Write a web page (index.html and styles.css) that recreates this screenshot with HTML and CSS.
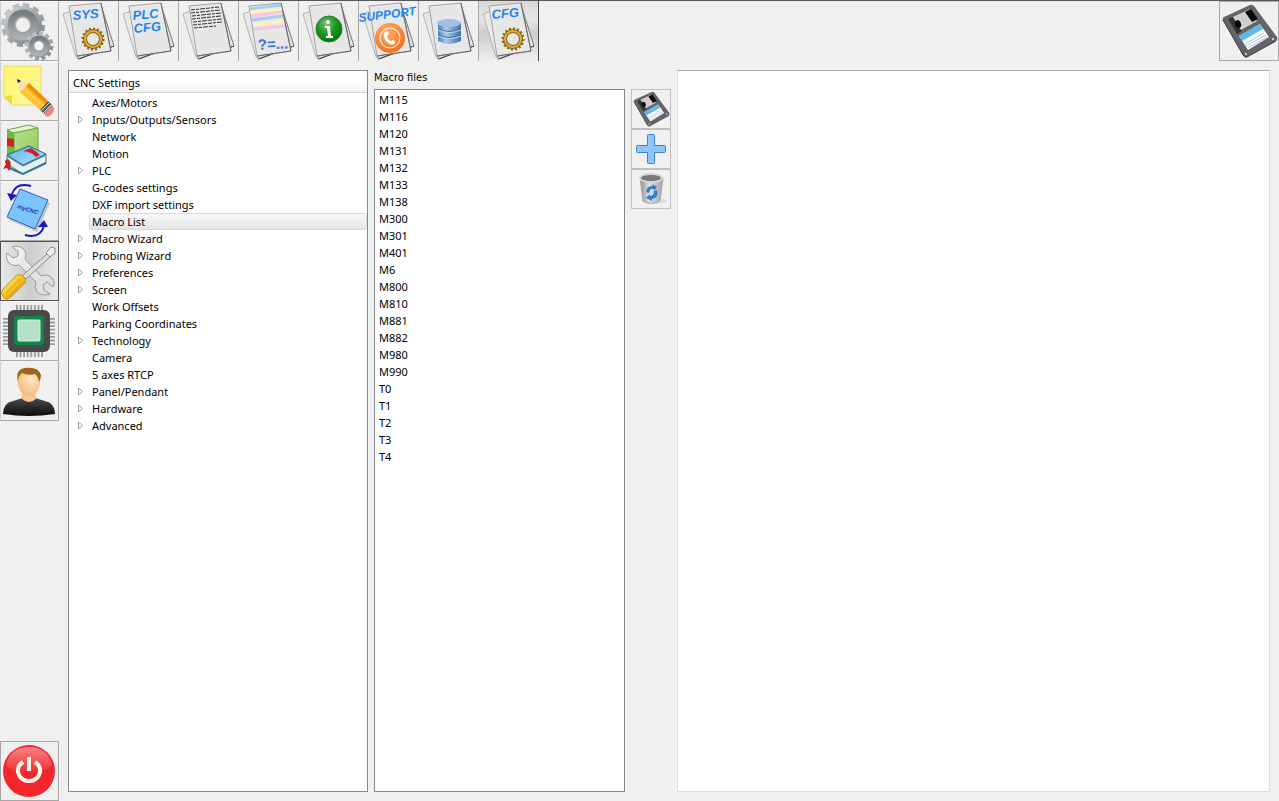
FILE: index.html
```html
<!DOCTYPE html>
<html lang="en">
<head>
    <meta charset="UTF-8">
    <meta name="viewport" content="width=device-width, initial-scale=1.0">
    <title>myCNC - Macro List</title>
    <link rel="stylesheet" href="styles.css">
</head>
<body>
    <!-- shared shapes -->
    <svg class="defs" aria-hidden="true">
        <defs>
            <linearGradient id="steel" x1="0" y1="0" x2="1" y2="1">
                <stop offset="0" stop-color="#c4c8ca"/>
                <stop offset="1" stop-color="#84898c"/>
            </linearGradient>
            <linearGradient id="ring" x1="0" y1="0" x2="0" y2="1">
                <stop offset="0" stop-color="#777d81"/>
                <stop offset="1" stop-color="#a9afb3"/>
            </linearGradient>
            <linearGradient id="note" x1="0" y1="0" x2="1" y2="1">
                <stop offset="0" stop-color="#fdf56a"/>
                <stop offset="1" stop-color="#fbf8a0"/>
            </linearGradient>
            <linearGradient id="wood" x1="0" y1="1" x2="1" y2="0">
                <stop offset="0.3" stop-color="#ffb52e"/>
                <stop offset="0.5" stop-color="#ffcf4a"/>
                <stop offset="0.6" stop-color="#f58a00"/>
            </linearGradient>
            <linearGradient id="greenbook" x1="0" y1="0" x2="1" y2="1">
                <stop offset="0" stop-color="#b5e08c"/>
                <stop offset="1" stop-color="#8fcf5c"/>
            </linearGradient>
            <linearGradient id="bluebook" x1="0" y1="0" x2="1" y2="1">
                <stop offset="0" stop-color="#5db0e4"/>
                <stop offset="1" stop-color="#b6e4fa"/>
            </linearGradient>
            <linearGradient id="handle" x1="0" y1="0" x2="1" y2="1">
                <stop offset="0.3" stop-color="#ffdc4a"/>
                <stop offset="0.7" stop-color="#e9a800"/>
            </linearGradient>
            <linearGradient id="wrench" x1="0" y1="0" x2="1" y2="1">
                <stop offset="0" stop-color="#f2f2f2"/>
                <stop offset="1" stop-color="#d8d8d8"/>
            </linearGradient>
            <radialGradient id="face" cx="0.6" cy="0.4" r="0.7">
                <stop offset="0" stop-color="#ffe6c4"/>
                <stop offset="1" stop-color="#f0b878"/>
            </radialGradient>
            <linearGradient id="shirt" x1="0" y1="0" x2="0" y2="1">
                <stop offset="0" stop-color="#4a4a4a"/>
                <stop offset="1" stop-color="#0c0c0c"/>
            </linearGradient>
            <linearGradient id="shine" x1="0" y1="0" x2="0" y2="1">
                <stop offset="0" stop-color="#ffc0c0"/>
                <stop offset="1" stop-color="#ee3038"/>
            </linearGradient>
            <radialGradient id="green" cx="0.4" cy="0.3" r="0.7">
                <stop offset="0" stop-color="#7cc67c"/>
                <stop offset="0.5" stop-color="#1f9a22"/>
                <stop offset="1" stop-color="#067a0a"/>
            </radialGradient>
            <radialGradient id="orange" cx="0.4" cy="0.3" r="0.8">
                <stop offset="0" stop-color="#ffae6a"/>
                <stop offset="1" stop-color="#f26a0c"/>
            </radialGradient>
            <linearGradient id="drum" x1="0" y1="0" x2="1" y2="0">
                <stop offset="0" stop-color="#4d7fb8"/>
                <stop offset="0.35" stop-color="#a9c8e8"/>
                <stop offset="1" stop-color="#3f6fa8"/>
            </linearGradient>
            <linearGradient id="bin" x1="0" y1="0" x2="1" y2="0">
                <stop offset="0" stop-color="#8e8e8e"/>
                <stop offset="0.4" stop-color="#e2e2e2"/>
                <stop offset="1" stop-color="#a2a2a2"/>
            </linearGradient>
        </defs>
        <symbol id="sheets" viewBox="0 0 59 60">
            <path d="M42 4 55 45 19 58 14 30Z" fill="#e2e2e2" stroke="#777"/>
            <path d="M20 58 55 45" stroke="#444"/>
            <path d="M4 13 12 10 30 52 17 56Z" fill="#e8e8e8" stroke="#b4b4b4"/>
            <path d="M10 5 42 2 52 50 18 55Z" fill="#e7e7e7" stroke="#a4a4a4"/>
            <path d="M42 2 52 50 18 55" fill="none" stroke="#666"/>
        </symbol>
        <symbol id="cog" viewBox="0 0 24 24">
            <circle cx="12" cy="12" r="10" fill="none" stroke="#8a6412" stroke-width="3" pathLength="32" stroke-dasharray="1 1"/>
            <circle cx="12" cy="12" r="8" fill="none" stroke="#8a6412" stroke-width="4"/>
            <circle cx="12" cy="12" r="8" fill="none" stroke="#e0b03a" stroke-width="2"/>
        </symbol>
        <symbol id="disk" viewBox="0 0 58 58">
            <path d="M4 15 30 3Q32 2 34 4L57 35Q58 38 56 39L27 55Q25 56 23 53L3 18Q2 16 4 15Z" fill="#646568"/>
            <path d="M3 18 23 53Q25 56 27 55L56 39" fill="none" stroke="#3a3a3c"/>
            <path d="M8 17 13 15 22 29 17 32Z" fill="#333"/>
            <path d="M13 15 30 7 37 19 21 28Z" fill="#cfcfcf"/>
            <path d="M25 10 31 7 38 17 32 20Z" fill="#080808"/>
            <ellipse cx="18" cy="22" rx="3" ry="4" fill="#080808" transform="rotate(-20 18 22)"/>
            <path d="M19 34 40 22 49 35 28 48Z" fill="#fff"/>
            <path d="M19 34 40 22 43 27 22 39Z" fill="#5cb8f0"/>
            <path d="M25 42 44 31M26 44 46 33M28 46 47 35" stroke="#a9c8de"/>
            <circle cx="53" cy="37" r="1" fill="#eee"/>
            <circle cx="26" cy="52" r="1" fill="#eee"/>
        </symbol>
        <symbol id="arrow" viewBox="0 0 7 9">
            <path d="M1.500 1v7L5.500 4.500Z" fill="#fff" stroke="#a0a0a0"/>
        </symbol>
    </svg>

    <div class="app">
        <nav class="sidebar">
            <button class="side-btn" aria-label="Settings">
                <svg viewBox="1 1 57 58">
                    <circle cx="23" cy="24" r="18" fill="none" stroke="url(#steel)" stroke-width="8" pathLength="24" stroke-dasharray="1.200 0.800"/>
                    <circle cx="23" cy="24" r="13" fill="none" stroke="url(#steel)" stroke-width="12"/>
                    <circle cx="23" cy="24" r="12" fill="none" stroke="url(#ring)" stroke-width="7"/>
                    <circle cx="39" cy="45" r="12" fill="none" stroke="url(#steel)" stroke-width="5" pathLength="24" stroke-dasharray="1.200 0.800"/>
                    <circle cx="39" cy="45" r="8" fill="#f4f4f4" stroke="url(#steel)" stroke-width="7"/>
                    <circle cx="39" cy="45" r="8" fill="none" stroke="url(#ring)" stroke-width="5"/>
                </svg>
            </button>
            <button class="side-btn" aria-label="Edit">
                <svg viewBox="1 1 57 58">
                    <path d="M4 5H41V44H12L4 36Z" fill="url(#note)" stroke="#e6df6a"/>
                    <path d="M4 36 12 34V44Z" fill="#e8dc32"/>
                    <path d="M17 18 29 22 20 31Z" fill="#fbe0ae"/>
                    <path d="M17 18 21 20 18 22Z" fill="#111"/>
                    <path d="M29 22 48 40 40 49 20 31Z" fill="url(#wood)"/>
                    <path d="M48 40 52 44 44 53 40 49Z" fill="#555"/>
                    <path d="M49 42 41 50M51 44 43 52" stroke="#ddd"/>
                    <path d="M52 44 54 47Q55 50 51 54 47 58 44 53Z" fill="#e58a8a"/>
                </svg>
            </button>
            <button class="side-btn" aria-label="Library">
                <svg viewBox="1 1 57 58">
                    <path d="M7 9 29 4 38 7 14 12Z" fill="#e4f2d4" stroke="#6aa846"/>
                    <path d="M14 12 38 7V29L14 37Z" fill="url(#greenbook)" stroke="#6aa846"/>
                    <path d="M7 9 14 12V37L7 34Z" fill="#6fb848"/>
                    <path d="M7 17 14 18V26L7 25Z" fill="#d42020"/>
                    <path d="M7 35 23 45 46 34V42L23 53 7 43Z" fill="#e8efe8" stroke="#3f6f8a"/>
                    <path d="M7 34 29 25 46 33 23 44Z" fill="url(#bluebook)" stroke="#1f6594"/>
                    <path d="M23 30 31 27Q36 30 40 34L36 36Q32 31 23 30Z" fill="#cf1f2b"/>
                    <path d="M9 47 23 53 46 42" fill="none" stroke="#2a779f" stroke-width="2"/>
                    <path d="M8 38Q3 40 6 43L3 48 7 47 9 50Q12 44 10 40Z" fill="#c22626"/>
                </svg>
            </button>
            <button class="side-btn" aria-label="myCNC">
                <svg viewBox="1 1 57 58">
                    <path d="M22 11 50 22 37 51 9 39Z" fill="#c4c4c4"/>
                    <path d="M20 8 48 19 35 48 7 36Z" fill="#7cc4fb" stroke="#2d5fc4"/>
                    <text class="logo-text" x="17" y="27" transform="rotate(18 17 27)">myCNC</text>
                    <path d="M31 5Q16 1 12 13" fill="none" stroke="#1717b4" stroke-width="2"/>
                    <path d="M7 12 17 14 11 20Z" fill="#1717b4"/>
                    <path d="M25 54Q40 58 44 45" fill="none" stroke="#1717b4" stroke-width="2"/>
                    <path d="M38 46 48 46 44 39Z" fill="#1717b4"/>
                </svg>
            </button>
            <button class="side-btn active" aria-label="Configuration" aria-pressed="true">
                <svg viewBox="1 1 57 58">
                    <path d="M12 6Q20 3 25 10 27 14 25 18L41 35Q48 32 53 38 56 43 53 46L47 41 43 44 44 49 50 53Q42 56 37 51 34 47 36 41L19 24Q13 26 8 21 5 17 7 12L13 17 18 15 18 10Z" fill="url(#wrench)" stroke="#999"/>
                    <path d="M22 35 47 13 50 16 26 38Z" fill="#ddd" stroke="#888"/>
                    <path d="M46 12 51 6 55 7 55 12 50 16Z" fill="#eee" stroke="#888"/>
                    <path d="M3 48 17 34Q20 32 24 36 27 39 25 42L11 56Q6 60 3 56 0 52 3 48Z" fill="url(#handle)" stroke="#c79a1c"/>
                    <path d="M6 52 20 38M9 55 23 41" stroke="#d9a21a"/>
                </svg>
            </button>
            <button class="side-btn" aria-label="Hardware">
                <svg viewBox="1 1 57 58">
                    <path d="M16 30H43" stroke="#999" stroke-width="52" pathLength="30" stroke-dasharray="2 2"/>
                    <path d="M29 17V44" stroke="#999" stroke-width="52" pathLength="30" stroke-dasharray="2 2"/>
                    <rect x="8" y="9" width="42" height="42" rx="6" fill="#494949"/>
                    <rect x="14" y="15" width="30" height="29" rx="3" fill="#13854c"/>
                    <rect x="18" y="19" width="22" height="21" rx="1" fill="#b4e2c6" stroke="#d4f0de"/>
                </svg>
            </button>
            <button class="side-btn" aria-label="User">
                <svg viewBox="1 1 57 58">
                    <path d="M3 53Q3 42 13 40L23 37H35L45 40Q55 42 55 53Q29 57 3 53Z" fill="url(#shirt)"/>
                    <path d="M22 30H36V38Q29 44 22 38Z" fill="#f5c890"/>
                    <ellipse cx="29" cy="21" rx="11" ry="14" fill="url(#face)"/>
                    <path d="M18 21Q15 8 25 7 38 5 41 14 41 18 39 21 38 15 35 13 27 15 22 12 18 15 18 21Z" fill="#9c6420"/>
                </svg>
            </button>
            <button class="side-btn power" aria-label="Power off">
                <svg viewBox="1 1 57 58">
                    <circle cx="29" cy="30" r="26" fill="#f0262c"/>
                    <path d="M6 24Q10 6 29 6T52 24Q45 32 29 32T6 24Z" fill="url(#shine)" opacity="0.600"/>
                    <path d="M23 21Q17 25 18 31 20 40 29 40T40 31Q41 25 35 21" fill="none" stroke="#fff6ea" stroke-width="4"/>
                    <path d="M29 16V30" stroke="#fff6ea" stroke-width="4"/>
                </svg>
            </button>
        </nav>

        <div class="main">
            <header class="toolbar">
                <button class="tab" aria-label="System">
                    <svg viewBox="0 0 59 60">
                        <use href="#sheets" width="59" height="60"/>
                        <text class="tab-text" x="14" y="19" transform="rotate(-5 14 19)">SYS</text>
                        <use href="#cog" x="22" y="26" width="24" height="24"/>
                    </svg>
                </button>
                <button class="tab" aria-label="PLC configuration">
                    <svg viewBox="0 0 59 60">
                        <use href="#sheets" width="59" height="60"/>
                        <text class="tab-text" x="14" y="19" transform="rotate(-5 14 19)">PLC</text>
                        <text class="tab-text" x="15" y="32" transform="rotate(-5 15 32)">CFG</text>
                    </svg>
                </button>
                <button class="tab" aria-label="Program text">
                    <svg viewBox="0 0 59 60">
                        <use href="#sheets" width="59" height="60"/>
                        <g stroke="#333" stroke-dasharray="4 1 3 1 5 1">
                            <path d="M12 9 40 6"/>
                            <path d="M12 12 41 9"/>
                            <path d="M13 15 42 12"/>
                            <path d="M13 18 42 15"/>
                            <path d="M14 21 43 18"/>
                            <path d="M14 24 43 21"/>
                            <path d="M15 27 37 25"/>
                        </g>
                    </svg>
                </button>
                <button class="tab" aria-label="Variables">
                    <svg viewBox="0 0 59 60">
                        <use href="#sheets" width="59" height="60"/>
                        <g stroke-width="3">
                            <path d="M11 8 42 4M13 19 44 15" stroke="#a9cdf2"/>
                            <path d="M11 11 43 8M14 24 45 20" stroke="#fdf3b8"/>
                            <path d="M12 15 43 11M14 28 46 25" stroke="#f8c4e8"/>
                        </g>
                        <text class="var-text" x="19" y="49" transform="rotate(-3 19 49)">?=...</text>
                    </svg>
                </button>
                <button class="tab" aria-label="Information">
                    <svg viewBox="0 0 59 60">
                        <use href="#sheets" width="59" height="60"/>
                        <circle cx="30" cy="28" r="13" fill="url(#green)" stroke="#2a7a2a"/>
                        <circle cx="29" cy="21" r="2" fill="#fff"/>
                        <path d="M26 25H31L32 35H34V37H27V35H29L28 27H26Z" fill="#fff"/>
                    </svg>
                </button>
                <button class="tab" aria-label="Support">
                    <svg viewBox="0 0 59 60">
                        <use href="#sheets" width="59" height="60"/>
                        <text class="tab-text small" x="0" y="21" transform="rotate(-7 0 21)">SUPPORT</text>
                        <circle cx="31" cy="37" r="15" fill="url(#orange)"/>
                        <circle cx="31" cy="37" r="10" fill="none" stroke="#fff"/>
                        <path d="M26 31Q29 29 30 33L28 35Q29 39 32 40L34 39Q38 41 35 43 31 45 27 40 23 34 26 31Z" fill="#fff"/>
                    </svg>
                </button>
                <button class="tab" aria-label="Database">
                    <svg viewBox="0 0 59 60">
                        <use href="#sheets" width="59" height="60"/>
                        <path d="M19 22V40Q30 46 42 40V22Z" fill="url(#drum)"/>
                        <path d="M19 28Q30 33 42 28M19 34Q30 39 42 34" fill="none" stroke="#35639c"/>
                        <path d="M19 29Q30 34 42 29M19 35Q30 40 42 35" fill="none" stroke="#c5dbf2"/>
                        <ellipse cx="30" cy="22" rx="12" ry="4" fill="#9dbfe2"/>
                    </svg>
                </button>
                <button class="tab active" aria-label="CNC configuration" aria-pressed="true">
                    <svg viewBox="0 0 59 60">
                        <use href="#sheets" width="59" height="60"/>
                        <text class="tab-text" x="13" y="18" transform="rotate(-5 13 18)">CFG</text>
                        <use href="#cog" x="22" y="26" width="24" height="24"/>
                    </svg>
                </button>
                <button class="side-btn save-all" aria-label="Save configuration">
                    <svg viewBox="0 0 58 58"><use href="#disk" width="58" height="58"/></svg>
                </button>
            </header>

            <main class="content">
                <section class="tree">
                    <h1 class="tree-title">CNC Settings</h1>
                    <ul class="tree-list" role="tree">
                        <li role="treeitem"><span>Axes/Motors</span></li>
                        <li role="treeitem" aria-expanded="false"><svg class="arrow"><use href="#arrow"/></svg><span>Inputs/Outputs/Sensors</span></li>
                        <li role="treeitem"><span>Network</span></li>
                        <li role="treeitem"><span>Motion</span></li>
                        <li role="treeitem" aria-expanded="false"><svg class="arrow"><use href="#arrow"/></svg><span>PLC</span></li>
                        <li role="treeitem"><span>G-codes settings</span></li>
                        <li role="treeitem"><span>DXF import settings</span></li>
                        <li role="treeitem" aria-selected="true"><span class="selected">Macro List</span></li>
                        <li role="treeitem" aria-expanded="false"><svg class="arrow"><use href="#arrow"/></svg><span>Macro Wizard</span></li>
                        <li role="treeitem" aria-expanded="false"><svg class="arrow"><use href="#arrow"/></svg><span>Probing Wizard</span></li>
                        <li role="treeitem" aria-expanded="false"><svg class="arrow"><use href="#arrow"/></svg><span>Preferences</span></li>
                        <li role="treeitem" aria-expanded="false"><svg class="arrow"><use href="#arrow"/></svg><span>Screen</span></li>
                        <li role="treeitem"><span>Work Offsets</span></li>
                        <li role="treeitem"><span>Parking Coordinates</span></li>
                        <li role="treeitem" aria-expanded="false"><svg class="arrow"><use href="#arrow"/></svg><span>Technology</span></li>
                        <li role="treeitem"><span>Camera</span></li>
                        <li role="treeitem"><span>5 axes RTCP</span></li>
                        <li role="treeitem" aria-expanded="false"><svg class="arrow"><use href="#arrow"/></svg><span>Panel/Pendant</span></li>
                        <li role="treeitem" aria-expanded="false"><svg class="arrow"><use href="#arrow"/></svg><span>Hardware</span></li>
                        <li role="treeitem" aria-expanded="false"><svg class="arrow"><use href="#arrow"/></svg><span>Advanced</span></li>
                    </ul>
                </section>

                <section class="files">
                    <h2 class="files-title" id="files-title">Macro files</h2>
                    <ul class="file-list" role="listbox" aria-labelledby="files-title">
                        <li role="option">M115</li>
                        <li role="option">M116</li>
                        <li role="option">M120</li>
                        <li role="option">M131</li>
                        <li role="option">M132</li>
                        <li role="option">M133</li>
                        <li role="option">M138</li>
                        <li role="option">M300</li>
                        <li role="option">M301</li>
                        <li role="option">M401</li>
                        <li role="option">M6</li>
                        <li role="option">M800</li>
                        <li role="option">M810</li>
                        <li role="option">M881</li>
                        <li role="option">M882</li>
                        <li role="option">M980</li>
                        <li role="option">M990</li>
                        <li role="option">T0</li>
                        <li role="option">T1</li>
                        <li role="option">T2</li>
                        <li role="option">T3</li>
                        <li role="option">T4</li>
                    </ul>
                </section>

                <div class="file-actions">
                    <button class="action" aria-label="Save macro">
                        <svg viewBox="0 0 58 58"><use href="#disk" width="58" height="58"/></svg>
                    </button>
                    <button class="action" aria-label="Add macro">
                        <svg viewBox="0 0 38 38">
                            <path d="M15.500 5.500Q15.500 4.500 16.500 4.500H21.500Q22.500 4.500 22.500 5.500V15.500H32.500Q33.500 15.500 33.500 16.500V21.500Q33.500 22.500 32.500 22.500H22.500V32.500Q22.500 33.500 21.500 33.500H16.500Q15.500 33.500 15.500 32.500V22.500H5.500Q4.500 22.500 4.500 21.500V16.500Q4.500 15.500 5.500 15.500H15.500Z" fill="#8cc6fb" stroke="#3f7fcf"/>
                        </svg>
                    </button>
                    <button class="action" aria-label="Delete macro">
                        <svg viewBox="0 0 38 38">
                            <ellipse cx="23" cy="31" rx="12" ry="3" fill="#dcdcdc"/>
                            <path d="M8 8 11 31Q19 36 28 31L31 8Z" fill="url(#bin)" stroke="#aaa"/>
                            <ellipse cx="19" cy="8" rx="11" ry="4" fill="#777" stroke="#d4d4d4" stroke-width="2"/>
                            <path d="M14 22Q15 15 21 16L20 14 25 17 22 21V19Q18 18 17 23Z" fill="#2f7fd0"/>
                            <path d="M25 20Q27 28 20 29L20 31 14 28 18 24V26Q22 26 22 21Z" fill="#2f7fd0"/>
                        </svg>
                    </button>
                </div>

                <textarea class="editor" aria-label="Macro text" spellcheck="false"></textarea>
            </main>
        </div>
    </div>
</body>
</html>
```
FILE: styles.css
```css
* { box-sizing: border-box; }
body { margin: 0; background: #f0f0f0; color: #000; font-family: "Noto Sans", "Open Sans", sans-serif; font-size: 11px; }
button { margin: 0; padding: 0; background: none; border: none; font: inherit; cursor: pointer; }
button svg { display: block; width: 100%; height: 100%; }
ul { margin: 0; padding: 0; list-style: none; }
.defs { position: absolute; width: 0; height: 0; }

.app { display: flex; height: 100vh; border-top: 1px solid #5a5555; }

/* left column */
.sidebar { display: flex; flex-direction: column; width: 59px; flex: none; }
.side-btn { width: 59px; height: 60px; flex: none; border: 1px solid #a8a8a8; }
.sidebar .side-btn { border-left-color: #d0d0d0; border-top-color: #f8f8f8; }
.sidebar .side-btn.active { border-color: #555; background: linear-gradient(90deg, #e8e8e8, #cccccc 50%, #e8e8e8); }
.sidebar .power { margin-top: auto; border-color: #a8a8a8; }

.main { display: flex; flex-direction: column; flex: 1; min-width: 0; }

/* top tabs */
.toolbar { display: flex; flex: none; height: 60px; }
.tab { width: 60px; height: 60px; border-right: 1px solid #a8a8a8; }
.tab.active { border-right-color: #444; background: linear-gradient(#d8d8d8, #e6e6e6 30%, #cccccc 55%, #f0f0f0); }
.save-all { width: 60px; margin-left: auto; }
.tab-text { font: italic bold 13px "Liberation Sans", sans-serif; fill: #1c86f2; }
.tab-text.small { font-size: 12px; }
.var-text { font: bold 15px "Liberation Sans", sans-serif; fill: #3d6fd8; }
.logo-text { font: italic bold 6px "Liberation Sans", sans-serif; fill: #1c3cb0; }

/* panels */
.content { display: flex; flex: 1; min-height: 0; padding: 9px; }
.tree { width: 300px; flex: none; background: #fff; border: 1px solid #828790; }
.tree-title { height: 22px; margin: 0 0 1px; padding-left: 4px; border-bottom: 1px solid #d5d5d5; background: linear-gradient(#fff 40%, #f2f3f5); font-size: 11px; font-weight: normal; line-height: 23px; }
.tree-list li { display: flex; align-items: center; justify-content: flex-end; height: 17px; line-height: 17px; }
.tree-list span { width: 278px; padding-left: 3px; }
.tree-list .selected { height: 17px; padding-left: 2px; border: 1px solid #d9d9d9; border-radius: 2px; background: linear-gradient(#f8f8f8, #e5e5e5); line-height: 15px; }
.arrow { width: 7px; height: 9px; margin-right: 5px; }

.files { display: flex; flex-direction: column; width: 251px; flex: none; margin-left: 6px; }
.files-title { height: 19px; margin: 0; font-family: "DejaVu Sans Condensed", "Noto Sans", sans-serif; font-size: 11px; font-weight: normal; line-height: 15px; }
.file-list { flex: 1; padding: 1px 4px; background: #fff; border: 1px solid #828790; line-height: 17px; }

.file-actions { display: flex; flex-direction: column; width: 40px; flex: none; margin: 19px 6px 0; }
.action { height: 40px; border: 1px solid #c0c0c0; }

.editor { flex: 1; min-width: 0; border: 1px solid #dcdfe3; border-top-color: #abadb3; background: #fff; resize: none; font: 12px "Liberation Mono", monospace; outline: none; }
```
